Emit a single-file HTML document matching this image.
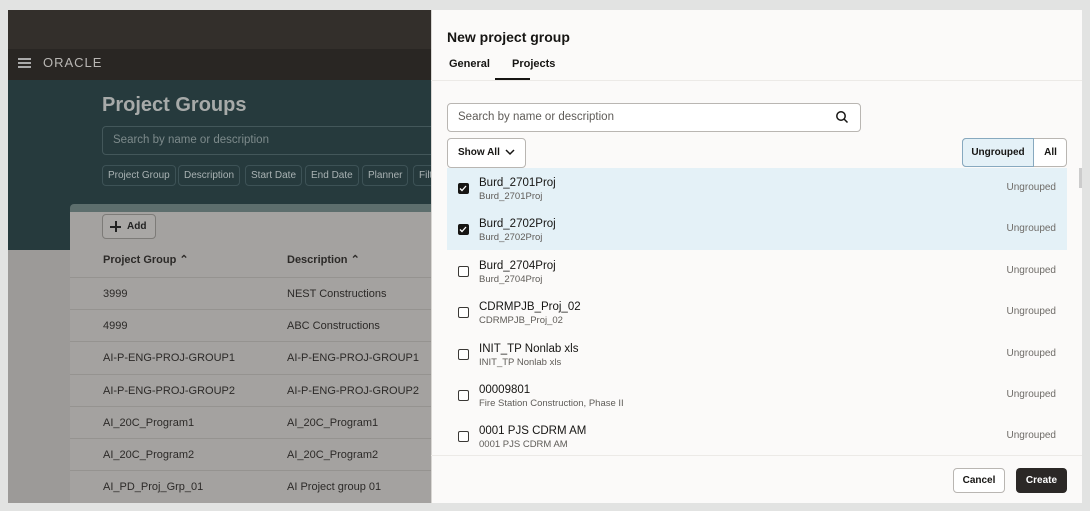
<!DOCTYPE html>
<html><head><meta charset="utf-8"><style>
*{box-sizing:border-box;margin:0;padding:0}
body{width:1090px;height:511px;background:#e2e3e2;font-family:"Liberation Sans",sans-serif;position:relative;overflow:hidden}
.a{position:absolute}
.t{white-space:nowrap}
.chip{position:absolute;top:165px;height:21px;border:1px solid #3d5256;border-radius:4px;color:#a9b2b3;font-size:10px;line-height:19px;padding:0 5px}
.tr{position:absolute;left:70px;width:361px;height:32px;border-top:1px solid #959390;font-size:11px;color:#2c2a28}
.tr span{position:absolute;top:10px}
.row{position:absolute;left:447px;width:620px;height:41px}
.cb{position:absolute;left:11px;top:15px;width:11px;height:11px;border:1.5px solid #3a3835;border-radius:2px;background:#fff}
.cb.on{background:#161513;border-color:#161513}
.n{position:absolute;left:32px;top:9px;font-size:11.5px;color:#161513}
.d{position:absolute;left:32px;top:23px;font-size:9.5px;color:#5f5c58}
.u{position:absolute;right:11px;top:14px;font-size:10px;color:#6f6c68}
</style></head><body>
<!-- left page -->
<div class="a" style="left:8px;top:10px;width:423px;height:39px;background:#332f2b"></div>
<div class="a" style="left:8px;top:49px;width:423px;height:31px;background:#292623"></div>
<div class="a" style="left:18px;top:58px;width:13px;height:2px;background:#aaa;box-shadow:0 4px 0 #aaa,0 8px 0 #aaa"></div>
<div class="a t" style="left:43px;top:55px;font-size:13px;letter-spacing:1px;color:#b8b6b3">ORACLE</div>
<div class="a" style="left:8px;top:80px;width:423px;height:170px;background:#263a3d"></div>
<div class="a" style="left:8px;top:250px;width:62px;height:253px;background:#9c9a98"></div>
<div class="a t" style="left:102px;top:94px;font-size:20px;font-weight:bold;color:#a7aaa9">Project Groups</div>
<div class="a" style="left:102px;top:126px;width:340px;height:29px;border:1px solid #43575a;border-radius:4px"></div>
<div class="a t" style="left:113px;top:134px;font-size:11.5px;color:#7d8a8b">Search by name or description</div>
<div class="chip" style="left:102px">Project Group</div>
<div class="chip" style="left:178px">Description</div>
<div class="chip" style="left:245px">Start Date</div>
<div class="chip" style="left:305px">End Date</div>
<div class="chip" style="left:362px">Planner</div>
<div class="chip" style="left:413px">Filt</div>
<div class="a" style="left:70px;top:204px;width:361px;height:9px;background:#5d6e6d;border-radius:4px 0 0 0"></div>
<div class="a" style="left:70px;top:212px;width:361px;height:291px;background:#a4a2a0"></div>
<div class="a" style="left:102px;top:214px;width:54px;height:25px;border:1px solid #7d7b78;border-radius:4px;background:#a9a7a5;font-size:10px;font-weight:bold;color:#222;line-height:23px;padding-left:24px">Add</div>
<div class="a" style="left:110px;top:226px;width:11px;height:1.5px;background:#222"></div>
<div class="a" style="left:115px;top:221px;width:1.5px;height:11px;background:#222"></div>
<div class="tr" style="top:243px;border-top:none;font-weight:bold"><span style="left:33px">Project Group ⌃</span><span style="left:217px">Description ⌃</span></div>
<div class="tr" style="top:277px"><span style="left:33px">3999</span><span style="left:217px">NEST Constructions</span></div>
<div class="tr" style="top:309px"><span style="left:33px">4999</span><span style="left:217px">ABC Constructions</span></div>
<div class="tr" style="top:341px"><span style="left:33px">AI-P-ENG-PROJ-GROUP1</span><span style="left:217px">AI-P-ENG-PROJ-GROUP1</span></div>
<div class="tr" style="top:374px"><span style="left:33px">AI-P-ENG-PROJ-GROUP2</span><span style="left:217px">AI-P-ENG-PROJ-GROUP2</span></div>
<div class="tr" style="top:406px"><span style="left:33px">AI_20C_Program1</span><span style="left:217px">AI_20C_Program1</span></div>
<div class="tr" style="top:438px"><span style="left:33px">AI_20C_Program2</span><span style="left:217px">AI_20C_Program2</span></div>
<div class="tr" style="top:470px"><span style="left:33px">AI_PD_Proj_Grp_01</span><span style="left:217px">AI Project group 01</span></div>
<!-- drawer -->
<div class="a" style="left:431px;top:10px;width:651px;height:493px;background:#fbfaf9;border-left:1px solid #d8d6d3"></div>
<div class="a" style="left:431px;top:80px;width:651px;height:1px;background:#eceae7"></div>
<div class="a t" style="left:447px;top:29px;font-size:14px;font-weight:bold;color:#161513">New project group</div>
<div class="a t" style="left:449px;top:58px;font-size:11px;font-weight:bold;color:#161513">General</div>
<div class="a t" style="left:512px;top:58px;font-size:11px;font-weight:bold;color:#161513">Projects</div>
<div class="a" style="left:495px;top:78px;width:35px;height:2px;background:#161513;left:495px"></div>
<div class="a" style="left:447px;top:103px;width:414px;height:29px;border:1px solid #b9b6b2;border-radius:4px;background:#fff"></div>
<div class="a t" style="left:458px;top:111px;font-size:11.5px;color:#5f5c58">Search by name or description</div>
<svg class="a" style="left:835px;top:110px" width="14" height="14" viewBox="0 0 14 14"><circle cx="6" cy="6" r="4.2" fill="none" stroke="#161513" stroke-width="1.5"/><path d="M9 9l3.5 3.5" stroke="#161513" stroke-width="1.5"/></svg>
<div class="a" style="left:447px;top:138px;width:79px;height:30px;border:1px solid #b9b6b2;border-radius:4px;background:#fff;font-size:10px;font-weight:bold;line-height:28px;padding-left:10px;color:#161513">Show All</div>
<svg class="a" style="left:505px;top:148px" width="10" height="8"><path d="M1 2l4 4 4-4" fill="none" stroke="#161513" stroke-width="1.5"/></svg>
<div class="a" style="left:962px;top:138px;width:105px;height:29px;border:1px solid #b9b6b2;border-radius:4px;background:#fff"></div>
<div class="a" style="left:962px;top:138px;width:72px;height:29px;border:1px solid #87a9bf;border-radius:4px 0 0 4px;background:#e4f1f7;font-size:10px;font-weight:bold;text-align:center;line-height:27px;color:#161513">Ungrouped</div>
<div class="a" style="left:1034px;top:138px;width:33px;height:29px;font-size:10px;font-weight:bold;text-align:center;line-height:29px;color:#161513">All</div>
<div class="a" style="left:447px;top:168px;width:620px;height:82px;background:#e4f1f7"></div>
<div class="a" style="left:1079px;top:168px;width:3px;height:20px;background:#ccc"></div>
<div class="row" style="top:168px"><div class="cb on"></div><div class="n">Burd_2701Proj</div><div class="d">Burd_2701Proj</div><div class="u">Ungrouped</div></div>
<div class="row" style="top:209px"><div class="cb on"></div><div class="n">Burd_2702Proj</div><div class="d">Burd_2702Proj</div><div class="u">Ungrouped</div></div>
<div class="row" style="top:251px"><div class="cb"></div><div class="n">Burd_2704Proj</div><div class="d">Burd_2704Proj</div><div class="u">Ungrouped</div></div>
<div class="row" style="top:292px"><div class="cb"></div><div class="n">CDRMPJB_Proj_02</div><div class="d">CDRMPJB_Proj_02</div><div class="u">Ungrouped</div></div>
<div class="row" style="top:334px"><div class="cb"></div><div class="n">INIT_TP Nonlab xls</div><div class="d">INIT_TP Nonlab xls</div><div class="u">Ungrouped</div></div>
<div class="row" style="top:375px"><div class="cb"></div><div class="n">00009801</div><div class="d">Fire Station Construction, Phase II</div><div class="u">Ungrouped</div></div>
<div class="row" style="top:416px"><div class="cb"></div><div class="n">0001 PJS CDRM AM</div><div class="d">0001 PJS CDRM AM</div><div class="u">Ungrouped</div></div>
<svg class="a" style="left:459px;top:185px" width="8" height="7"><path d="M1 3.5l2 2 4-4.5" fill="none" stroke="#fff" stroke-width="1.3"/></svg>
<svg class="a" style="left:459px;top:226px" width="8" height="7"><path d="M1 3.5l2 2 4-4.5" fill="none" stroke="#fff" stroke-width="1.3"/></svg>
<div class="a" style="left:431px;top:455px;width:651px;height:1px;background:#eceae7"></div>
<div class="a" style="left:953px;top:468px;width:52px;height:25px;border:1px solid #b9b6b2;border-radius:4px;background:#fff;font-size:10px;font-weight:bold;text-align:center;line-height:23px;color:#161513">Cancel</div>
<div class="a" style="left:1016px;top:468px;width:51px;height:25px;border-radius:4px;background:#2b2826;font-size:10px;font-weight:bold;text-align:center;line-height:25px;color:#fff">Create</div>
</body></html>
